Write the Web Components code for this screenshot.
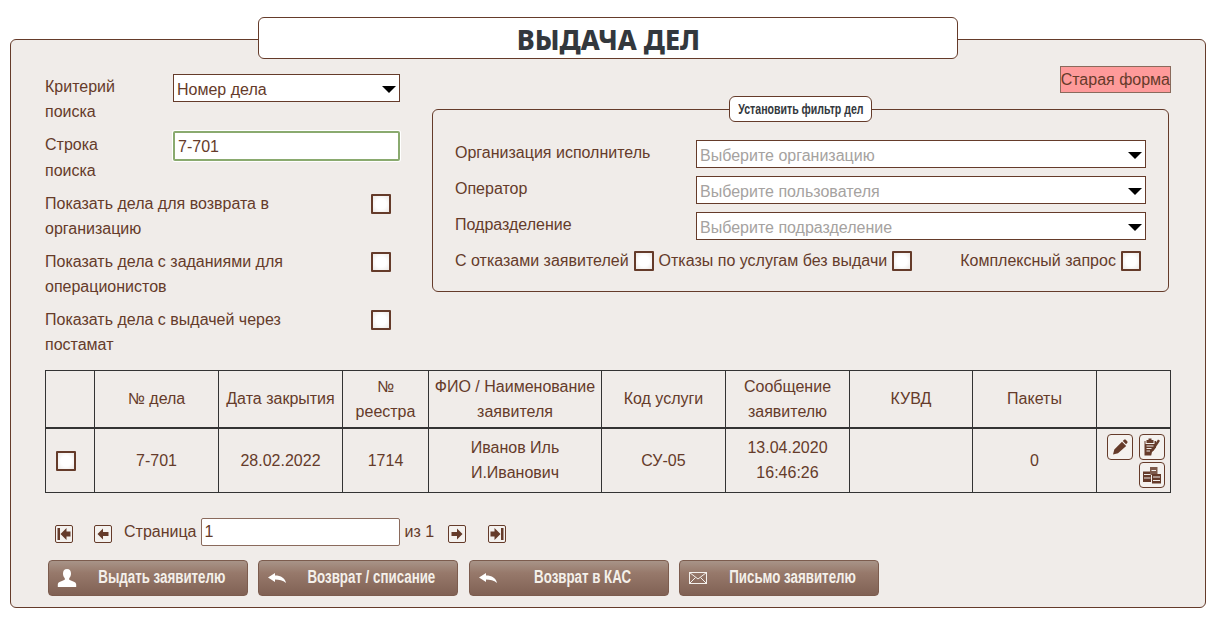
<!DOCTYPE html>
<html lang="ru">
<head>
<meta charset="utf-8">
<title>Выдача дел</title>
<style>
  html, body { margin: 0; background: #fff; }
  body {
    padding: 17px 9px 0 10px;
    font: 16px/25px "Liberation Sans", Arial, sans-serif;
    color: #653b2a;
  }
</style>
</head>
<body>
<issue-page></issue-page>

<script>
const ICONS = {
  user: '<svg width="20" height="18" viewBox="0 0 20 18"><path fill="#fff" d="M10 0c2.800 0 4 2 4 4.600 0 2-.7 3.700-1.800 4.700v1.500c1.500 1 7 1.800 7 4.600V18H.8v-2.600c0-2.800 5.500-3.600 7-4.600V9.300C6.700 8.300 6 6.600 6 4.600 6 2 7.200 0 10 0z"/></svg>',
  reply: '<svg width="20" height="14" viewBox="-1 -2 20 14"><path fill="#fff" d="M7 0 0 4.500 7 9V6.500c4 0 8 .5 11 3.500C17 5 13 2.500 7 2.500z"/></svg>',
  mail: '<svg width="20" height="14" viewBox="0 0 20 14" fill="none" stroke="#f4f0ec" stroke-width="1"><rect x="1.500" y="1.500" width="17" height="11"/><path d="M1.500 1.500 10 8l8.500-6.500M1.500 12.500 7.500 6.500M18.500 12.500l-6-6"/></svg>',
  first: '<svg width="14" height="12" viewBox="0 0 14 12"><path fill="#653b2a" d="M.5 0h2.500v12H.5zM3.500 6l6-6v3.500h4v5h-4V12z"/></svg>',
  prev: '<svg width="12" height="12" viewBox="0 0 12 12"><path fill="#653b2a" d="M.5 6l5.500-5.500v3.500h5.500v4H6v3.500z"/></svg>',
  next: '<svg width="12" height="12" viewBox="0 0 12 12"><path fill="#653b2a" d="M11.500 6 6 .5V4H.5v4H6v3.500z"/></svg>',
  last: '<svg width="14" height="12" viewBox="0 0 14 12"><path fill="#653b2a" d="M13.500 0H11v12h2.500zM10.500 6l-6-6v3.500h-4v5h4V12z"/></svg>',
  pencil: '<svg width="16" height="16" viewBox="0 0 16 16"><path fill="#653b2a" d="M1 15.500l1.300-5L10 2.800l4.200 4.200L6 14.300zM10.800 2l1.200-1.200c.6-.5 1.300-.5 1.800 0l1.400 1.400c.5.5.5 1.200 0 1.800L14 5.200z"/></svg>',
  task: '<svg width="18" height="18" viewBox="0 0 18 18"><path fill="#653b2a" d="M5.500 .5h3V2h2v3h-7V2h2zM1.500 3H2.500v3h9V3h1.500v6.500L9 14l-.8 3.500H1.500z"/><path fill="#653b2a" d="M15 1.500l2 1.300-6.500 10-2.300 1.200.3-2.500z"/><path stroke="#f0ecE9" stroke-width="1" d="M3.500 8h7M3.500 10.500h5M3.500 13h3.500"/></svg>',
  stack: '<svg width="20" height="18" viewBox="0 0 20 18"><path fill="#653b2a" d="M1 5.500h8v10.500H1z"/><path fill="#7d5a4b" d="M8 1h7.500v8H8z"/><path fill="#653b2a" d="M10 8h9v9.500h-9z"/><path stroke="#f0ecE9" stroke-width="1" d="M2 8.500h6.500M2 12h6.500M11 11h7M11 14.500h7M9.500 4.500h4.500"/></svg>'
};

class NarrowText extends HTMLElement {
  constructor() {
    super();
    this.attachShadow({mode: 'open'}).innerHTML = `
      <style>
        :host {
          display: inline-block;
          flex: none;
          white-space: nowrap;
          transform: scaleX(var(--narrow, .75));
        }
      </style>
      <slot></slot>`;
  }
}
customElements.define('narrow-text', NarrowText);

class IssueTitle extends HTMLElement {
  constructor() {
    super();
    this.attachShadow({mode: 'open'}).innerHTML = `
      <style>
        :host {
          display: block;
          width: 698px;
          height: 40px;
          margin: 0 auto -20px 248px;
          position: relative;
          z-index: 1;
          background: #fff;
          border: 1px solid #653b2a;
          border-radius: 6px;
          text-align: center;
          font: 800 28px/43px "Noto Sans", sans-serif;
          color: #33383d;
          --narrow: .96;
        }
      </style>
      <narrow-text><slot></slot></narrow-text>`;
  }
}
customElements.define('issue-title', IssueTitle);

class DropSelect extends HTMLElement {
  constructor() {
    super();
    this.attachShadow({mode: 'open'}).innerHTML = `
      <style>
        :host {
          display: flex;
          align-items: center;
          justify-content: space-between;
          box-sizing: border-box;
          height: 28px;
          padding: 2px 3px 0 3px;
          background: #fff;
          border: 1px solid #653b2a;
          color: #653b2a;
        }
        :host([placeholder]) { color: #a5a2a0; }
        i {
          width: 0;
          height: 0;
          border-style: solid;
          border-width: 7px 7px 0;
          border-color: #000 transparent transparent;
        }
      </style>
      <span><slot></slot></span><i></i>`;
  }
}
customElements.define('drop-select', DropSelect);

class CheckBox extends HTMLElement {
  constructor() {
    super();
    this.attachShadow({mode: 'open'}).innerHTML = `
      <style>
        :host {
          display: block;
          flex: none;
          box-sizing: border-box;
          width: 20px;
          height: 20px;
          border: 2px solid #653b2a;
          border-radius: 1px;
          background: radial-gradient(circle, #fff 45%, #ece8e5 100%);
        }
      </style>`;
  }
}
customElements.define('check-box', CheckBox);

class CheckRow extends HTMLElement {
  constructor() {
    super();
    this.attachShadow({mode: 'open'}).innerHTML = `
      <style>
        :host {
          display: flex;
          justify-content: space-between;
          align-items: flex-start;
          height: 50px;
          width: 346px;
        }
        div { width: 250px; padding-top: 1px; }
        check-box { margin-top: 3.500px; }
      </style>
      <div><slot></slot></div><check-box></check-box>`;
  }
}
customElements.define('check-row', CheckRow);

class SearchPanel extends HTMLElement {
  constructor() {
    super();
    this.attachShadow({mode: 'open'}).innerHTML = `
      <style>
        :host {
          display: flex;
          flex-direction: column;
          gap: 8px;
          width: 355px;
          flex: none;
          padding-top: 34px;
        }
        .row { display: flex; height: 50px; }
        .row span { width: 128px; flex: none; }
        .row .tall { line-height: 26px; }
        drop-select { width: 227px; }
        .input {
          box-sizing: border-box;
          width: 228px;
          height: 30px;
          margin-top: -1px;
          padding: 1px 3px 0;
          background: #fff;
          border: 2px solid #8aaa6f;
          border-radius: 2px;
          box-shadow: 0 0 0 1px #fff;
          line-height: 26px;
        }
      </style>
      <div class="row"><span>Критерий<br>поиска</span><drop-select>Номер дела</drop-select></div>
      <div class="row"><span class="tall">Строка<br>поиска</span><div class="input">7-701</div></div>
      <check-row>Показать дела для возврата в организацию</check-row>
      <check-row>Показать дела с заданиями для операционистов</check-row>
      <check-row>Показать дела с выдачей через постамат</check-row>`;
  }
}
customElements.define('search-panel', SearchPanel);

class FilterPanel extends HTMLElement {
  constructor() {
    super();
    this.attachShadow({mode: 'open'}).innerHTML = `
      <style>
        :host { display: block; width: 739px; flex: none; margin-left: 32px; padding-top: 26px; }
        .old {
          display: block;
          width: max-content;
          margin-left: auto;
          box-sizing: border-box;
          height: 27px;
          padding: 0;
          line-height: 25px;
          background: #fe9a9a;
          border: 1px solid #8a6a5c;
        }
        .box {
          box-sizing: border-box;
          position: relative;
          width: 737px;
          height: 183px;
          margin-top: 16px;
          padding: 30px 22px 0;
          border: 1px solid #653b2a;
          border-radius: 6px;
        }
        .legend {
          position: absolute;
          top: -14px;
          left: 296px;
          display: flex;
          justify-content: center;
          box-sizing: border-box;
          width: 143px;
          height: 26px;
          background: #fff;
          border: 1px solid #653b2a;
          border-radius: 6px;
          font: 700 14px/25px "Liberation Sans", sans-serif;
          color: #33383d;
          --narrow: .755;
        }
        .field { display: flex; justify-content: space-between; align-items: center; margin-bottom: 8px; width: 691px; }
        .field span { margin-top: -4px; }
        drop-select { width: 450px; }
        .checks { display: flex; align-items: center; margin-top: 11px; height: 20px; }
        .checks span { margin-top: -2px; }
        .checks check-box { margin-left: 5px; }
        .a { margin-left: 5px; }
        .b { margin-left: 48px; }
      </style>
      <div class="old">Старая форма</div>
      <div class="box">
        <div class="legend"><narrow-text>Установить фильтр дел</narrow-text></div>
        <div class="field"><span>Организация исполнитель</span><drop-select placeholder>Выберите организацию</drop-select></div>
        <div class="field"><span>Оператор</span><drop-select placeholder>Выберите пользователя</drop-select></div>
        <div class="field"><span>Подразделение</span><drop-select placeholder>Выберите подразделение</drop-select></div>
        <div class="checks">
          <span>С отказами заявителей</span><check-box></check-box>
          <span class="a">Отказы по услугам без выдачи</span><check-box></check-box>
          <span class="b">Комплексный запрос</span><check-box></check-box>
        </div>
      </div>`;
  }
}
customElements.define('filter-panel', FilterPanel);

class IconButton extends HTMLElement {
  constructor() {
    super();
    this.attachShadow({mode: 'open'}).innerHTML = `
      <style>
        :host {
          display: flex;
          align-items: center;
          justify-content: center;
          box-sizing: border-box;
          width: 26px;
          height: 26px;
          border: 1px solid #653b2a;
          border-radius: 4px;
          background: #f4f1ee;
        }
        :host([small]) { width: 18px; height: 18px; border-radius: 2px; }
      </style>
      ${ICONS[this.getAttribute('icon')]}`;
  }
}
customElements.define('icon-button', IconButton);

class CaseTable extends HTMLElement {
  constructor() {
    super();
    this.attachShadow({mode: 'open'}).innerHTML = `
      <style>
        :host { display: block; width: 1127px; margin: 14px 0 0 34px; }
        table { border-collapse: collapse; table-layout: fixed; width: 1125px; }
        th, td {
          border: 1px solid #333;
          padding: 0 4px;
          text-align: center;
          font-weight: 400;
        }
        thead tr { height: 57px; }
        thead th { border-bottom: 2px solid #333; }
        tbody tr { height: 65px; }
        td.pick { padding: 2px 0 0 10px; }
        .acts { display: flex; flex-wrap: wrap; justify-content: flex-end; gap: 2px 6px; width: 68px; padding-top: 2px; }
        td.last { padding: 0; }
      </style>
      <table>
        <colgroup>
          <col style="width:49px"><col style="width:124px"><col style="width:124px"><col style="width:86px"><col style="width:173px"><col style="width:124px"><col style="width:124px"><col style="width:123px"><col style="width:124px"><col style="width:74px">
        </colgroup>
        <thead>
          <tr>
            <th></th><th>№ дела</th><th>Дата закрытия</th><th>№ реестра</th><th>ФИО / Наименование заявителя</th><th>Код услуги</th><th>Сообщение заявителю</th><th>КУВД</th><th>Пакеты</th><th></th>
          </tr>
        </thead>
        <tbody>
          <tr>
            <td class="pick"><check-box></check-box></td><td>7-701</td><td>28.02.2022</td><td>1714</td><td>Иванов Иль<br>И.Иванович</td><td>СУ-05</td><td>13.04.2020<br>16:46:26</td><td></td><td>0</td>
            <td class="last"><div class="acts"><icon-button icon="pencil"></icon-button><icon-button icon="task"></icon-button><icon-button icon="stack"></icon-button></div></td>
          </tr>
        </tbody>
      </table>`;
  }
}
customElements.define('case-table', CaseTable);

class PagerBar extends HTMLElement {
  constructor() {
    super();
    this.attachShadow({mode: 'open'}).innerHTML = `
      <style>
        :host { display: flex; align-items: center; height: 28px; margin: 25px 0 0 44px; }
        .input {
          box-sizing: border-box;
          width: 199px;
          height: 28px;
          margin: 0 5px 0 4px;
          padding: 0 3px;
          background: #fff;
          border: 1px solid #8a6a5c;
          border-radius: 2px;
          line-height: 25px;
        }
        span { margin-top: -2px; }
        icon-button { margin-top: 3px; }
      </style>
      <icon-button small icon="first"></icon-button>
      <icon-button small icon="prev" style="margin-left:21px"></icon-button>
      <span style="margin-left:12px">Страница</span>
      <div class="input">1</div>
      <span>из 1</span>
      <icon-button small icon="next" style="margin-left:14px"></icon-button>
      <icon-button small icon="last" style="margin-left:22px"></icon-button>`;
  }
}
customElements.define('pager-bar', PagerBar);

class ActionButton extends HTMLElement {
  constructor() {
    super();
    this.attachShadow({mode: 'open'}).innerHTML = `
      <style>
        :host {
          display: block;
          position: relative;
          box-sizing: border-box;
          width: 200px;
          height: 36px;
          border: 1px solid #7c5c4e;
          border-radius: 4px;
          background: linear-gradient(#a89488 0%, #97796b 35%, #806154 100%);
          color: #f4f0ea;
          font: 700 18px/32px "Liberation Sans", sans-serif;
          --narrow: .74;
        }
        .ic {
          position: absolute;
          left: 8px;
          top: 0;
          bottom: 0;
          display: flex;
          align-items: center;
        }
        .tx { display: flex; justify-content: center; padding-left: 27px; }
      </style>
      <div class="ic">${ICONS[this.getAttribute('icon')]}</div>
      <div class="tx"><narrow-text><slot></slot></narrow-text></div>`;
  }
}
customElements.define('action-button', ActionButton);

class IssuePage extends HTMLElement {
  constructor() {
    super();
    this.attachShadow({mode: 'open'}).innerHTML = `
      <style>
        :host { display: block; width: 1196px; }
        .panel {
          box-sizing: border-box;
          height: 569px;
          background: #f0ecE9;
          border: 1px solid #653b2a;
          border-radius: 6px;
        }
        .top { display: flex; height: 316px; margin-left: 34px; }
        .actions { display: flex; gap: 10px; margin: 14px 0 0 37px; }
        .actions action-button:nth-child(3) { margin-left: 1px; }
      </style>
      <issue-title>ВЫДАЧА ДЕЛ</issue-title>
      <div class="panel">
        <div class="top"><search-panel></search-panel><filter-panel></filter-panel></div>
        <case-table></case-table>
        <pager-bar></pager-bar>
        <div class="actions">
          <action-button icon="user">Выдать заявителю</action-button>
          <action-button icon="reply">Возврат / списание</action-button>
          <action-button icon="reply">Возврат в КАС</action-button>
          <action-button icon="mail">Письмо заявителю</action-button>
        </div>
      </div>`;
  }
}
customElements.define('issue-page', IssuePage);
</script>
</body>
</html>
